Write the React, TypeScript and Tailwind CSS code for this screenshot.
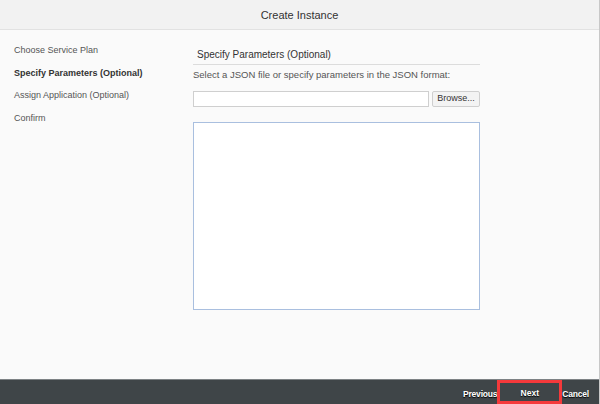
const steps = [
  { label: "Choose Service Plan", active: false },
  { label: "Specify Parameters (Optional)", active: true },
  { label: "Assign Application (Optional)", active: false },
  { label: "Confirm", active: false },
];

export default function App() {
  return (
    <div
      className="w-[600px] h-[404px] flex flex-col bg-[#fafafa] border-r border-[#c8c8c8] overflow-hidden"
      style={{ fontFamily: '"Liberation Sans", Arial, sans-serif' }}
    >
      <header className="h-[30px] shrink-0 flex items-center justify-center bg-[#f2f2f2] border-b border-[#e2e2e2]">
        <h1 className="text-[11px] leading-[14px] pt-[1px] text-[#333]">Create Instance</h1>
      </header>

      <main className="flex-1 flex">
        <nav className="w-[193px] shrink-0 pl-[14px] pt-[14px] flex flex-col gap-[10.5px]">
          {steps.map((s) => (
            <p
              key={s.label}
              className={
                s.active
                  ? "text-[9px] leading-[12px] font-bold text-[#333]"
                  : "text-[9px] leading-[12px] text-[#555]"
              }
            >
              {s.label}
            </p>
          ))}
        </nav>

        <section className="w-[287px] pt-[18px] flex flex-col">
          <h2 className="pl-1 pb-[2px] text-[10px] leading-[14px] text-[#333] border-b border-[#dcdcdc]">
            Specify Parameters (Optional)
          </h2>
          <p className="mt-[4px] text-[9.5px] leading-[12px] text-[#555]">
            Select a JSON file or specify parameters in the JSON format:
          </p>
          <div className="mt-[10px] flex gap-[3px] h-[16px]">
            <input
              type="text"
              className="flex-1 min-w-0 h-full bg-white border border-[#cfcfcf] outline-none"
            />
            <button className="w-[48px] h-full bg-[#f3f3f3] border border-[#cfcfcf] rounded-[2px] text-[9px] text-[#333]">
              Browse...
            </button>
          </div>
          <textarea className="mt-[15px] h-[188px] w-full resize-none bg-white border border-[#a9bfdf] outline-none" />
        </section>
      </main>

      <footer className="h-[25px] shrink-0 flex justify-end items-stretch bg-[#3f4548] border-t border-[#7d8285] pr-[10px]">
        <button className="pt-[4px] text-[8.5px] font-bold text-white tracking-[-0.2px] [text-shadow:0_1px_1px_#000]">
          Previous
        </button>
        <button className="w-[65px] shrink-0 pt-[2px] border-[3px] border-[#f5393b] text-[8.5px] font-bold text-white [text-shadow:0_1px_1px_#000]">
          Next
        </button>
        <button className="pt-[4px] text-[8.5px] font-bold text-white tracking-[-0.2px] [text-shadow:0_1px_1px_#000]">
          Cancel
        </button>
      </footer>
    </div>
  );
}
